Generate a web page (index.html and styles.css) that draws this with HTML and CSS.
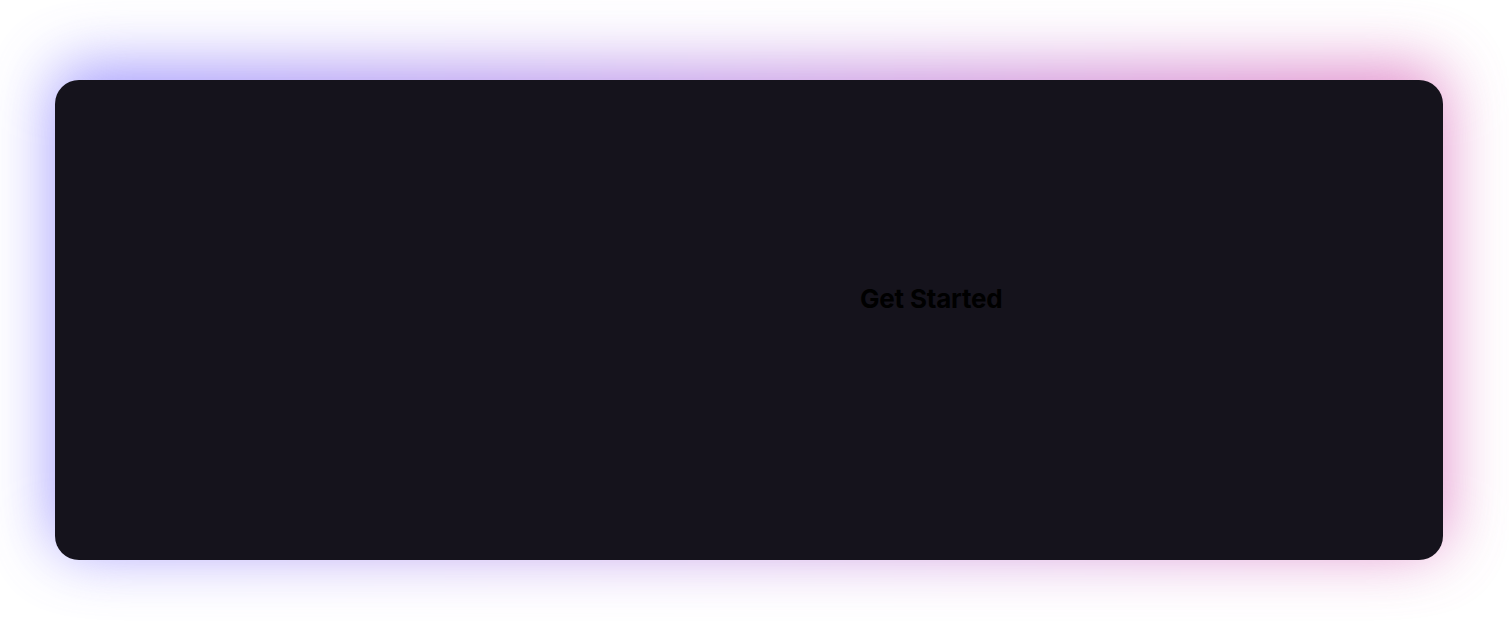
FILE: index.html
```html
<!DOCTYPE html>
<html lang="en">
<head>
<meta charset="utf-8">
<title>Get Started</title>
<link rel="stylesheet" href="styles.css">
</head>
<body>
<main class="stage">
  <section class="card">
    <div class="card-content">
      <span class="cta">Get Started</span>
    </div>
  </section>
</main>
</body>
</html>
```
FILE: styles.css
```css
html, body {
  margin: 0;
  padding: 0;
  background: #ffffff;
}

.stage {
  position: relative;
  z-index: 0;
  padding: 80px 0 0 55px;
  height: 621px;
  box-sizing: border-box;
  overflow: hidden;
}

.card {
  position: relative;
  width: 1388px;
  height: 480px;
  border-radius: 24px;
  background: #15131c;
}

.card::before {
  content: "";
  position: absolute;
  left: 0;
  right: 0;
  top: -12px;
  bottom: 10px;
  border-radius: 24px;
  background: linear-gradient(90deg, #7c74ff 0%, #a870e0 45%, #d860b4 100%);
  filter: blur(32px);
  opacity: 0.75;
  z-index: -1;
}

.card-content {
  display: flex;
  align-items: flex-start;
  padding: 201px 0 0 805px;
}

.cta {
  font-family: Inter, "Liberation Sans", sans-serif;
  font-weight: 700;
  font-size: 26px;
  line-height: 36px;
  color: #000000;
  letter-spacing: -0.2px;
}
```
